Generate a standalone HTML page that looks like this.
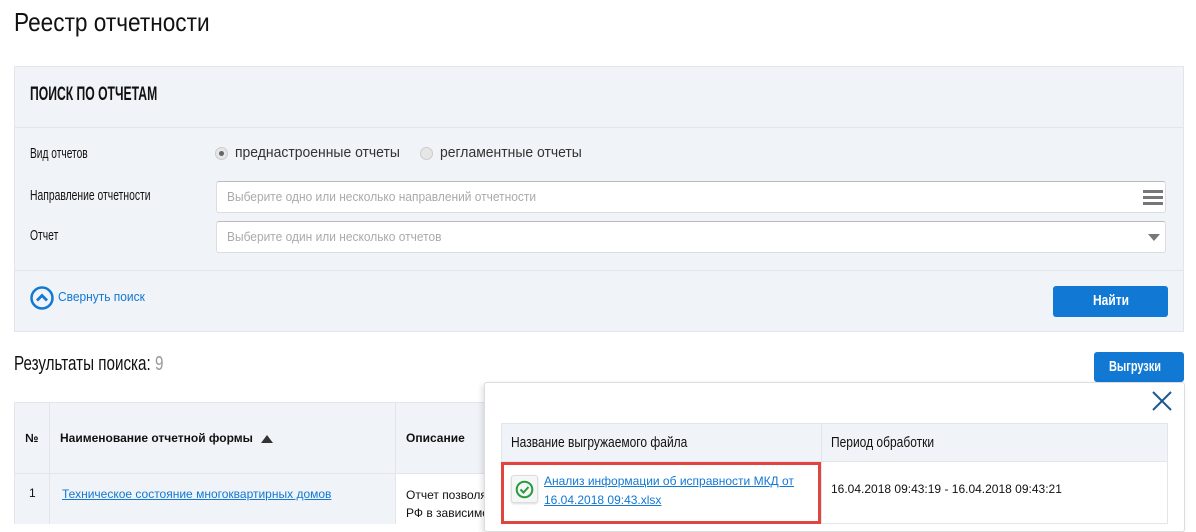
<!DOCTYPE html>
<html><head><meta charset="utf-8"><style>
*{box-sizing:border-box;margin:0;padding:0}
body{width:1196px;height:524px;overflow:hidden;background:#fff;font-family:"Liberation Sans",sans-serif;color:#111;position:relative}
.a{position:absolute;transform-origin:0 0;white-space:nowrap}
</style></head><body>
<div class="a" style="left:14px;top:7px;font-size:26px;transform:scaleX(0.87)">Реестр отчетности</div>
<div class="a" style="left:14px;top:66px;width:1170px;height:266px;background:#f0f3f7;border:1px solid #e2e6ea"></div>
<div class="a" style="left:15px;top:127px;width:1168px;height:1px;background:#e2e6ea"></div>
<div class="a" style="left:30px;top:84px;font-size:19px;font-weight:bold;transform:scaleX(0.64)">ПОИСК ПО ОТЧЕТАМ</div>
<div class="a" style="left:30px;top:145px;font-size:15px;transform:scaleX(0.68)">Вид отчетов</div>
<div class="a" style="left:215px;top:147px;width:13px;height:13px;border-radius:50%;background:#e6e6e6;border:1px solid #ccc"><div style="margin:3px;width:5px;height:5px;border-radius:50%;background:#666"></div></div>
<div class="a" style="left:235px;top:144px;font-size:15px;color:#333;transform:scaleX(0.93)">преднастроенные отчеты</div>
<div class="a" style="left:420px;top:147px;width:13px;height:13px;border-radius:50%;background:#e6e6e6;border:1px solid #ccc"></div>
<div class="a" style="left:440px;top:144px;font-size:15px;color:#333;transform:scaleX(0.93)">регламентные отчеты</div>
<div class="a" style="left:30px;top:187px;font-size:15px;transform:scaleX(0.69)">Направление отчетности</div>
<div class="a" style="left:216px;top:181px;width:950px;height:32px;background:#fff;border:1px solid #ddd;border-top-color:#bbb;border-radius:3px"></div>
<div class="a" style="left:227px;top:189px;font-size:13px;color:#aaa;transform:scaleX(0.92)">Выберите одно или несколько направлений отчетности</div>
<div class="a" style="left:1143px;top:190px;width:20px;height:3px;background:#777;box-shadow:0 6px 0 #777,0 12px 0 #777"></div>
<div class="a" style="left:30px;top:227px;font-size:15px;transform:scaleX(0.69)">Отчет</div>
<div class="a" style="left:216px;top:221px;width:950px;height:32px;background:#fff;border:1px solid #ddd;border-top-color:#bbb;border-radius:3px"></div>
<div class="a" style="left:227px;top:229px;font-size:13px;color:#aaa;transform:scaleX(0.92)">Выберите один или несколько отчетов</div>
<div class="a" style="left:1148px;top:234px;border-left:6px solid transparent;border-right:6px solid transparent;border-top:7px solid #777"></div>
<div class="a" style="left:15px;top:270px;width:1168px;height:1px;background:#e2e6ea"></div>
<svg class="a" style="left:30px;top:286px" width="24" height="24"><circle cx="12" cy="12" r="10.5" fill="none" stroke="#1178d4" stroke-width="2.5"/><path d="M7 14.5L12 9.5L17 14.5" fill="none" stroke="#1178d4" stroke-width="2.8"/></svg>
<div class="a" style="left:58px;top:289px;font-size:13px;color:#1178d4;transform:scaleX(0.92)">Свернуть поиск</div>
<div class="a" style="left:1053px;top:286px;width:115px;height:31px;background:#1178d4;border-radius:3px"></div>
<div class="a" style="left:1093px;top:292px;font-size:15px;font-weight:bold;color:#fff;transform:scaleX(0.8)">Найти</div>
<div class="a" style="left:14px;top:353px;font-size:20px;transform:scaleX(0.76)">Результаты поиска: <span style="color:#999">9</span></div>
<div class="a" style="left:1094px;top:352px;width:90px;height:30px;background:#1178d4;border-radius:3px"></div>
<div class="a" style="left:1109px;top:358px;font-size:15px;font-weight:bold;color:#fff;transform:scaleX(0.73)">Выгрузки</div>
<div class="a" style="left:14px;top:402px;width:480px;height:72px;background:#f0f3f7;border:1px solid #e2e6ea"></div>
<div class="a" style="left:14px;top:474px;width:480px;height:50px;background:#f0f3f7;border-left:1px solid #e2e6ea"></div>
<div class="a" style="left:395px;top:474px;width:100px;height:50px;background:#fff"></div>
<div class="a" style="left:49px;top:402px;width:1px;height:122px;background:#e2e6ea"></div>
<div class="a" style="left:395px;top:402px;width:1px;height:122px;background:#e2e6ea"></div>
<div class="a" style="left:25px;top:431px;font-size:12px;font-weight:bold">№</div>
<div class="a" style="left:60px;top:431px;font-size:12px;font-weight:bold">Наименование отчетной формы</div>
<div class="a" style="left:261px;top:435px;border-left:6px solid transparent;border-right:6px solid transparent;border-bottom:8px solid #333"></div>
<div class="a" style="left:406px;top:431px;font-size:12px;font-weight:bold">Описание</div>
<div class="a" style="left:29px;top:486px;font-size:12px">1</div>
<div class="a" style="left:62px;top:487px;font-size:12px;color:#1178d4;text-decoration:underline">Техническое состояние многоквартирных домов </div>
<div class="a" style="left:406px;top:486px;font-size:12px;line-height:18px">Отчет позволя<br>РФ в зависимо</div>
<div class="a" style="left:484px;top:382px;width:701px;height:150px;background:#fff;border:1px solid #ddd;border-radius:3px;box-shadow:-2px 2px 6px rgba(0,0,0,.12)"></div>
<svg class="a" style="left:1151px;top:390px" width="22" height="22"><path d="M2 2L20 20M20 2L2 20" stroke="#1a5a8e" stroke-width="2"/></svg>
<div class="a" style="left:501px;top:423px;width:667px;height:101px;border:1px solid #e2e6ea"></div>
<div class="a" style="left:502px;top:424px;width:665px;height:38px;background:#f0f3f7;border-bottom:1px solid #e2e6ea"></div>
<div class="a" style="left:821px;top:424px;width:1px;height:100px;background:#e2e6ea"></div>
<div class="a" style="left:511px;top:434px;font-size:15px;transform:scaleX(0.8)">Название выгружаемого файла</div>
<div class="a" style="left:831px;top:434px;font-size:15px;transform:scaleX(0.8)">Период обработки</div>
<div class="a" style="left:501px;top:462px;width:320px;height:62px;border:3px solid #e0463f"></div>
<div class="a" style="left:511px;top:475px;width:27px;height:28px;background:#f4f6f8;border:1px solid #ddd;border-radius:3px;box-shadow:0 1px 2px rgba(0,0,0,.15)"></div>
<svg class="a" style="left:515px;top:480px" width="19" height="19"><circle cx="9.5" cy="9.5" r="7.8" fill="none" stroke="#2a9a3a" stroke-width="2"/><path d="M5.5 9.5L8.5 12.5L13.5 7" fill="none" stroke="#2a9a3a" stroke-width="2"/></svg>
<div class="a" style="left:544px;top:472px;font-size:12px;line-height:19px;color:#1178d4;text-decoration:underline">Анализ информации об исправности МКД от<br>16.04.2018 09:43.xlsx</div>
<div class="a" style="left:831px;top:482px;font-size:12px">16.04.2018 09:43:19 - 16.04.2018 09:43:21</div>
</body></html>
